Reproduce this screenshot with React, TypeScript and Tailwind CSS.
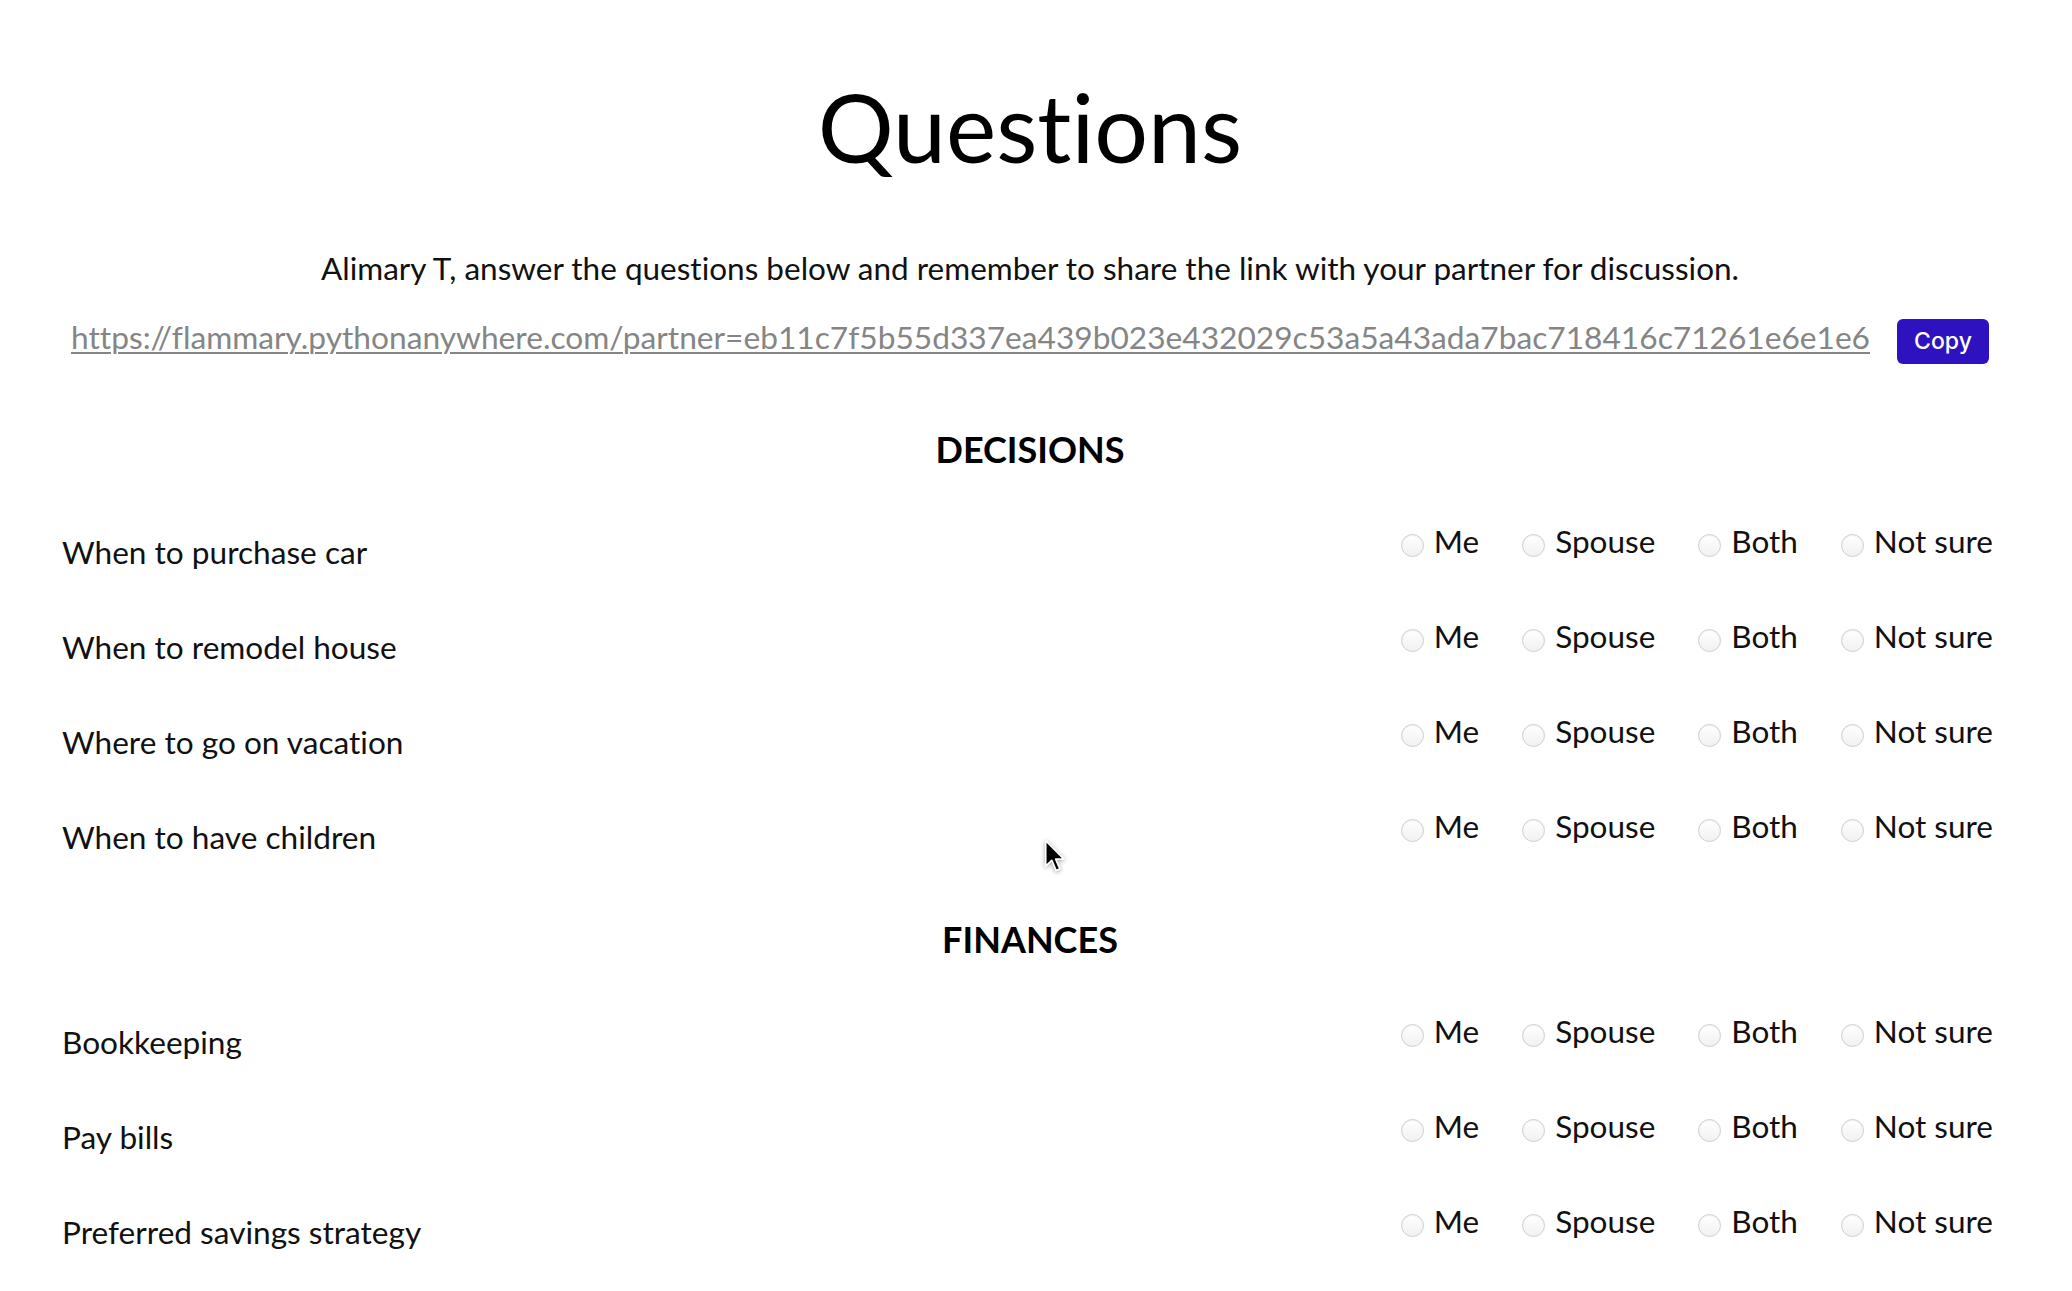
const sections = [
  {
    title: 'DECISIONS',
    questions: ['When to purchase car', 'When to remodel house', 'Where to go on vacation', 'When to have children'],
  },
  {
    title: 'FINANCES',
    questions: ['Bookkeeping', 'Pay bills', 'Preferred savings strategy'],
  },
];

const choices = ['Me', 'Spouse', 'Both', 'Not sure'];

const link =
  'https://flammary.pythonanywhere.com/partner=eb11c7f5b55d337ea439b023e432029c53a5a43ada7bac718416c71261e6e1e6';

const QuestionRow = ({ label, name }: { label: string; name: string }) => {
  return (
    <div className="flex h-[95px] items-start justify-between">
      <div className="pt-[17px] text-[31.6px] leading-none text-[#111]">{label}</div>
      <div className="flex items-start gap-[43px] pr-[5px] pt-[6px]">
        {choices.map((c) => (
          <label key={c} className="flex items-start gap-[10px] text-[31.5px] leading-none text-[#111]">
            <input
              type="radio"
              name={name}
              className="mt-[8px] h-[23px] w-[23px] appearance-none rounded-full border border-[#cfcfcf] bg-gradient-to-b from-white to-[#f1f1f1] shadow-[inset_0_1px_1px_rgba(0,0,0,0.06)]"
            />
            <span>{c}</span>
          </label>
        ))}
      </div>
    </div>
  );
};

const Cursor = () => (
  <svg className="absolute left-[1044px] top-[839px] drop-shadow-[0_1px_2px_rgba(0,0,0,0.35)]" width="22" height="34" viewBox="0 0 13 20">
    <path d="M1 1 L1 16 L4.6 12.6 L7.2 18.6 L9.4 17.6 L6.9 11.8 L11.8 11.8 Z" fill="#000" stroke="#fff" strokeWidth="1" strokeLinejoin="round" />
  </svg>
);

export default function App() {
  return (
    <div className="relative min-h-[1291px] bg-white font-['Lato',sans-serif] text-black [font-variant-ligatures:none]">
      <main className="ml-[62px] mr-[74px] pt-[79px]">
        <h1 className="text-center text-[95px] leading-none font-normal">Questions</h1>
        <p className="mt-[79px] text-center text-[31.5px] leading-none text-[#111]">
          Alimary T, answer the questions below and remember to share the link with your partner for discussion.
        </p>
        <div className="mt-[34px] flex items-start justify-center gap-[27px]">
          <a href="#" className="pt-[3px] text-[31.7px] leading-none text-[#858585] underline decoration-[2px] underline-offset-[3px]">
            {link}
          </a>
          <button className="h-[45px] w-[92px] shrink-0 rounded-[6px] bg-[#2f12bf] font-['Inter',sans-serif] text-[23px] font-medium text-white">
            Copy
          </button>
        </div>

        {sections.map((s, i) => (
          <section key={s.title} className={i === 0 ? 'mt-[67px]' : 'mt-[21px]'}>
            <h2 className="mb-[53px] text-center text-[36px] leading-none font-bold">{s.title}</h2>
            {s.questions.map((q, j) => (
              <QuestionRow key={q} label={q} name={`${s.title}-${j}`} />
            ))}
          </section>
        ))}
      </main>
      <Cursor />
    </div>
  );
}
